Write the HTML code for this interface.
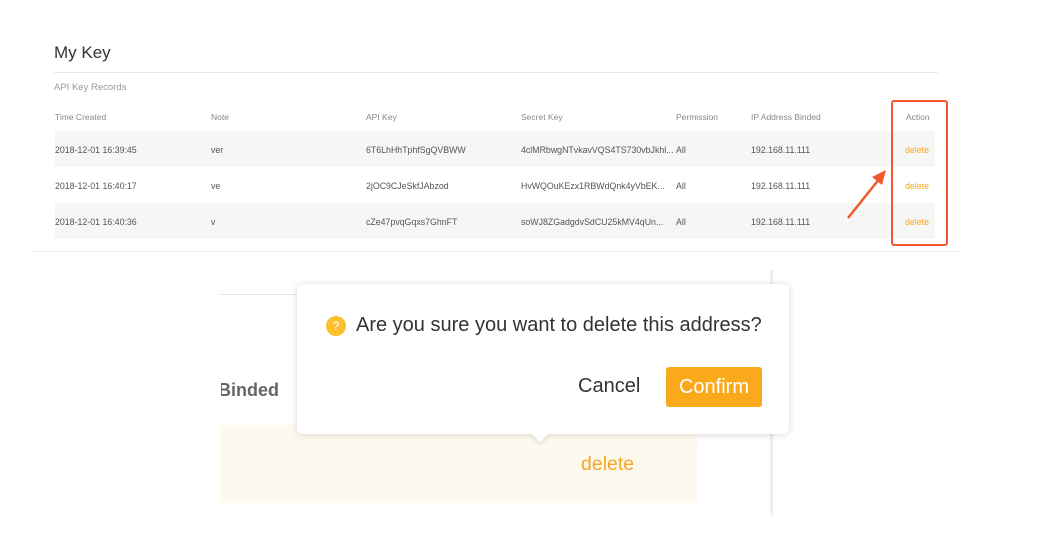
<!DOCTYPE html>
<html><head><meta charset="utf-8"><style>
body{margin:0;width:1050px;height:548px;background:#fff;font-family:"Liberation Sans",sans-serif;position:relative;overflow:hidden}
.a{position:absolute;white-space:nowrap}
.s{font-size:8.5px;color:#888}
.d{font-size:8.8px;color:#555}
.row{position:absolute;left:55px;width:880px;height:36px;background:#f6f6f6}
</style></head><body>
<div class="a" style="left:54px;top:43px;font-size:17px;color:#333">My Key</div>
<div class="a" style="left:54px;top:72px;width:884px;height:1px;background:#e6e6e6"></div>
<div class="a s" style="left:54px;top:82px;color:#999;font-size:9.5px">API Key Records</div>
<div class="a s" style="left:55px;top:112px">Time Created</div>
<div class="a s" style="left:211px;top:112px">Note</div>
<div class="a s" style="left:366px;top:112px">API Key</div>
<div class="a s" style="left:521px;top:112px">Secret Key</div>
<div class="a s" style="left:676px;top:112px">Permission</div>
<div class="a s" style="left:751px;top:112px">IP Address Binded</div>
<div class="a s" style="left:906px;top:112px">Action</div>
<div class="row" style="top:131px"></div>
<div class="row" style="top:203px"></div>
<div class="a d" style="left:55px;top:145px">2018-12-01 16:39:45</div>
<div class="a d" style="left:211px;top:145px">ver</div>
<div class="a d" style="left:366px;top:145px">6T6LhHhTphfSgQVBWW</div>
<div class="a d" style="left:521px;top:145px">4clMRbwgNTvkavVQS4TS730vbJkhl...</div>
<div class="a d" style="left:676px;top:145px">All</div>
<div class="a d" style="left:751px;top:145px">192.168.11.111</div>
<div class="a d" style="left:905px;top:145px;color:#f5a623">delete</div>
<div class="a d" style="left:55px;top:181px">2018-12-01 16:40:17</div>
<div class="a d" style="left:211px;top:181px">ve</div>
<div class="a d" style="left:366px;top:181px">2jOC9CJeSkfJAbzod</div>
<div class="a d" style="left:521px;top:181px">HvWQOuKEzx1RBWdQnk4yVbEK...</div>
<div class="a d" style="left:676px;top:181px">All</div>
<div class="a d" style="left:751px;top:181px">192.168.11.111</div>
<div class="a d" style="left:905px;top:181px;color:#f5a623">delete</div>
<div class="a d" style="left:55px;top:217px">2018-12-01 16:40:36</div>
<div class="a d" style="left:211px;top:217px">v</div>
<div class="a d" style="left:366px;top:217px">cZe47pvqGqxs7GhnFT</div>
<div class="a d" style="left:521px;top:217px">soWJ8ZGadgdvSdCU25kMV4qUn...</div>
<div class="a d" style="left:676px;top:217px">All</div>
<div class="a d" style="left:751px;top:217px">192.168.11.111</div>
<div class="a d" style="left:905px;top:217px;color:#f5a623">delete</div>
<div class="a" style="left:891px;top:100px;width:53px;height:142px;border:2px solid #f4572e;border-radius:3px"></div>
<svg class="a" style="left:840px;top:165px" width="50" height="60"><line x1="8" y1="53" x2="40" y2="13" stroke="#f4572e" stroke-width="2.5"/><polygon points="46,5 32,12 42,20" fill="#f4572e"/></svg>
<div class="a" style="left:30px;top:251px;width:930px;height:1px;background:#eee"></div>
<div class="a" style="left:220px;top:294px;width:80px;height:1px;background:#e6e6e6"></div>
<div class="a" style="left:770px;top:270px;width:3px;height:245px;background:#eee"></div>
<div class="a" style="left:218px;top:380px;font-size:18px;font-weight:bold;color:#666">Binded</div>
<div class="a" style="left:213px;top:378px;width:8px;height:26px;background:#fff"></div>
<div class="a" style="left:220px;top:425px;width:477px;height:78px;background:#fef9ee"></div>
<div class="a" style="left:581px;top:453px;font-size:19.5px;color:#f5a623">delete</div>
<div class="a" style="left:297px;top:284px;width:492px;height:150px;background:#fff;border-radius:6px;box-shadow:0 1px 8px rgba(0,0,0,.15)"></div>
<div class="a" style="left:534px;top:428px;width:12px;height:12px;background:#fff;transform:rotate(45deg);box-shadow:2px 2px 3px rgba(0,0,0,.08)"></div>
<div class="a" style="left:326px;top:316px;width:20px;height:20px;border-radius:50%;background:#fbc02d;color:#fff;font-size:12px;text-align:center;line-height:20px">?</div>
<div class="a" style="left:356px;top:314px;font-size:20px;color:#333">Are you sure you want to delete this address?</div>
<div class="a" style="left:578px;top:375px;font-size:20px;color:#333">Cancel</div>
<div class="a" style="left:666px;top:367px;width:96px;height:40px;background:#f9a91a;border-radius:3px;color:#fff;font-size:20px;text-align:center;line-height:40px">Confirm</div>
</body></html>
